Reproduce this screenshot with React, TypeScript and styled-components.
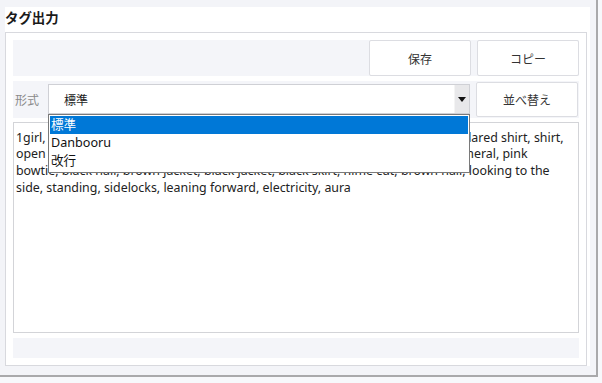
import { FC } from 'react';
import styled, { createGlobalStyle } from 'styled-components';

const GlobalStyle = createGlobalStyle`
  html, body {
    margin: 0;
    padding: 0;
    background: #f7f8fb;
  }
  body {
    font-family: "Noto Sans", "Noto Sans CJK JP", sans-serif;
    color: #222;
  }
`;

const Window = styled.div`
  box-sizing: border-box;
  width: 598px;
  height: 377px;
  padding: 7px 0 0 5px;
  background: #f3f4f8;
  border-right: 2px solid #a9a9ab;
  border-bottom: 2px solid #a9a9ab;
`;

const Panel = styled.div`
  width: 585px;
  background: #fff;
  display: flex;
  flex-direction: column;
`;

const Title = styled.div`
  height: 25px;
  line-height: 21px;
  font-size: 13.4px;
  font-weight: bold;
  color: #1a1a1a;
  font-family: "Noto Sans CJK JP", sans-serif;
`;

const Frame = styled.div`
  box-sizing: border-box;
  width: 582px;
  height: 334px;
  border: 1px solid #d8d9de;
  padding: 7px;
  display: flex;
  flex-direction: column;
`;

const Strip = styled.div<{ $h: number; $gap?: number }>`
  box-sizing: border-box;
  height: ${p => p.$h}px;
  margin-top: ${p => p.$gap ?? 0}px;
  background: #f4f5f9;
  display: flex;
  align-items: center;
  gap: 6px;
`;

const Toolbar = styled(Strip)`
  justify-content: flex-end;
  align-items: stretch;
`;

const Button = styled.button<{ $h?: number }>`
  box-sizing: border-box;
  width: 102px;
  height: ${p => p.$h ?? 36}px;
  margin: 0;
  padding: 0;
  background: #fff;
  border: 1px solid #dcdde2;
  border-radius: 2px;
  font-family: "Noto Sans CJK JP", sans-serif;
  font-size: 12px;
  color: #333;
`;

const Label = styled.span`
  box-sizing: border-box;
  flex: 0 0 29px;
  padding-left: 2px;
  font-size: 12px;
  color: #8a8a8a;
  font-family: "Noto Sans CJK JP", sans-serif;
`;

const SelectWrap = styled.div`
  position: relative;
  box-sizing: border-box;
  width: 422px;
  height: 30px;
  border: 1px solid #cfd0d5;
  background: #fff;
  display: flex;
  align-items: center;
`;

const SelectValue = styled.span`
  flex: 1;
  padding-left: 15px;
  font-size: 12px;
  font-family: "Noto Sans CJK JP", sans-serif;
  color: #222;
`;

const Arrow = styled.div`
  width: 14px;
  align-self: stretch;
  background: #e8e8ea;
  border-left: 1px solid #f4f4f4;
  display: flex;
  align-items: center;
  justify-content: center;
`;

const List = styled.ul`
  position: absolute;
  left: -1px;
  top: 29px;
  box-sizing: border-box;
  width: 422px;
  margin: 0;
  padding: 1px 1px 2px;
  list-style: none;
  background: #fff;
  border: 1px solid #7a7a7a;
  z-index: 2;
`;

const Item = styled.li<{ $active?: boolean }>`
  height: 18px;
  line-height: 18px;
  padding-left: 1px;
  font-size: 12.6px;
  font-family: "Noto Sans", "Noto Sans CJK JP", sans-serif;
  background: ${p => (p.$active ? '#0078d7' : '#fff')};
  color: ${p => (p.$active ? '#fff' : '#111')};
`;

const TextBox = styled.div`
  box-sizing: border-box;
  height: 212px;
  margin-top: 4px;
  padding: 7px 2px;
  border: 1px solid #d3d4d8;
  background: #fff;
  font-size: 12.4px;
  line-height: 16.6px;
  color: #222;
  white-space: pre-wrap;
`;

const tags = [
  '1girl, solo, long hair, looking at viewer, smiling, long sleeves, pleated skirts, collared shirt, shirt,',
  'open jacket, jacket, white shirts, school uniform, upper body, medium hair, general, pink',
  'bowtie, black hair, brown jacket, black jacket, black skirt, hime cut, brown hair, looking to the',
  'side, standing, sidelocks, leaning forward, electricity, aura',
].join('\n');

const App: FC = () => {
  return (
    <>
      <GlobalStyle />
      <Window>
        <Panel>
          <Title>タグ出力</Title>
          <Frame>
            <Toolbar $h={36}>
              <Button>保存</Button>
              <Button>コピー</Button>
            </Toolbar>
            <Strip $h={37} $gap={5}>
              <Label>形式</Label>
              <SelectWrap>
                <SelectValue>標準</SelectValue>
                <Arrow>
                  <svg width="8" height="5" viewBox="0 0 8 5">
                    <path d="M0 0H8L4 5Z" fill="#111" />
                  </svg>
                </Arrow>
                <List>
                  <Item $active>標準</Item>
                  <Item>Danbooru</Item>
                  <Item>改行</Item>
                </List>
              </SelectWrap>
              <Button $h={35}>並べ替え</Button>
            </Strip>
            <TextBox>{tags}</TextBox>
            <Strip $h={20} $gap={5} />
          </Frame>
        </Panel>
      </Window>
    </>
  );
};

export default App;
